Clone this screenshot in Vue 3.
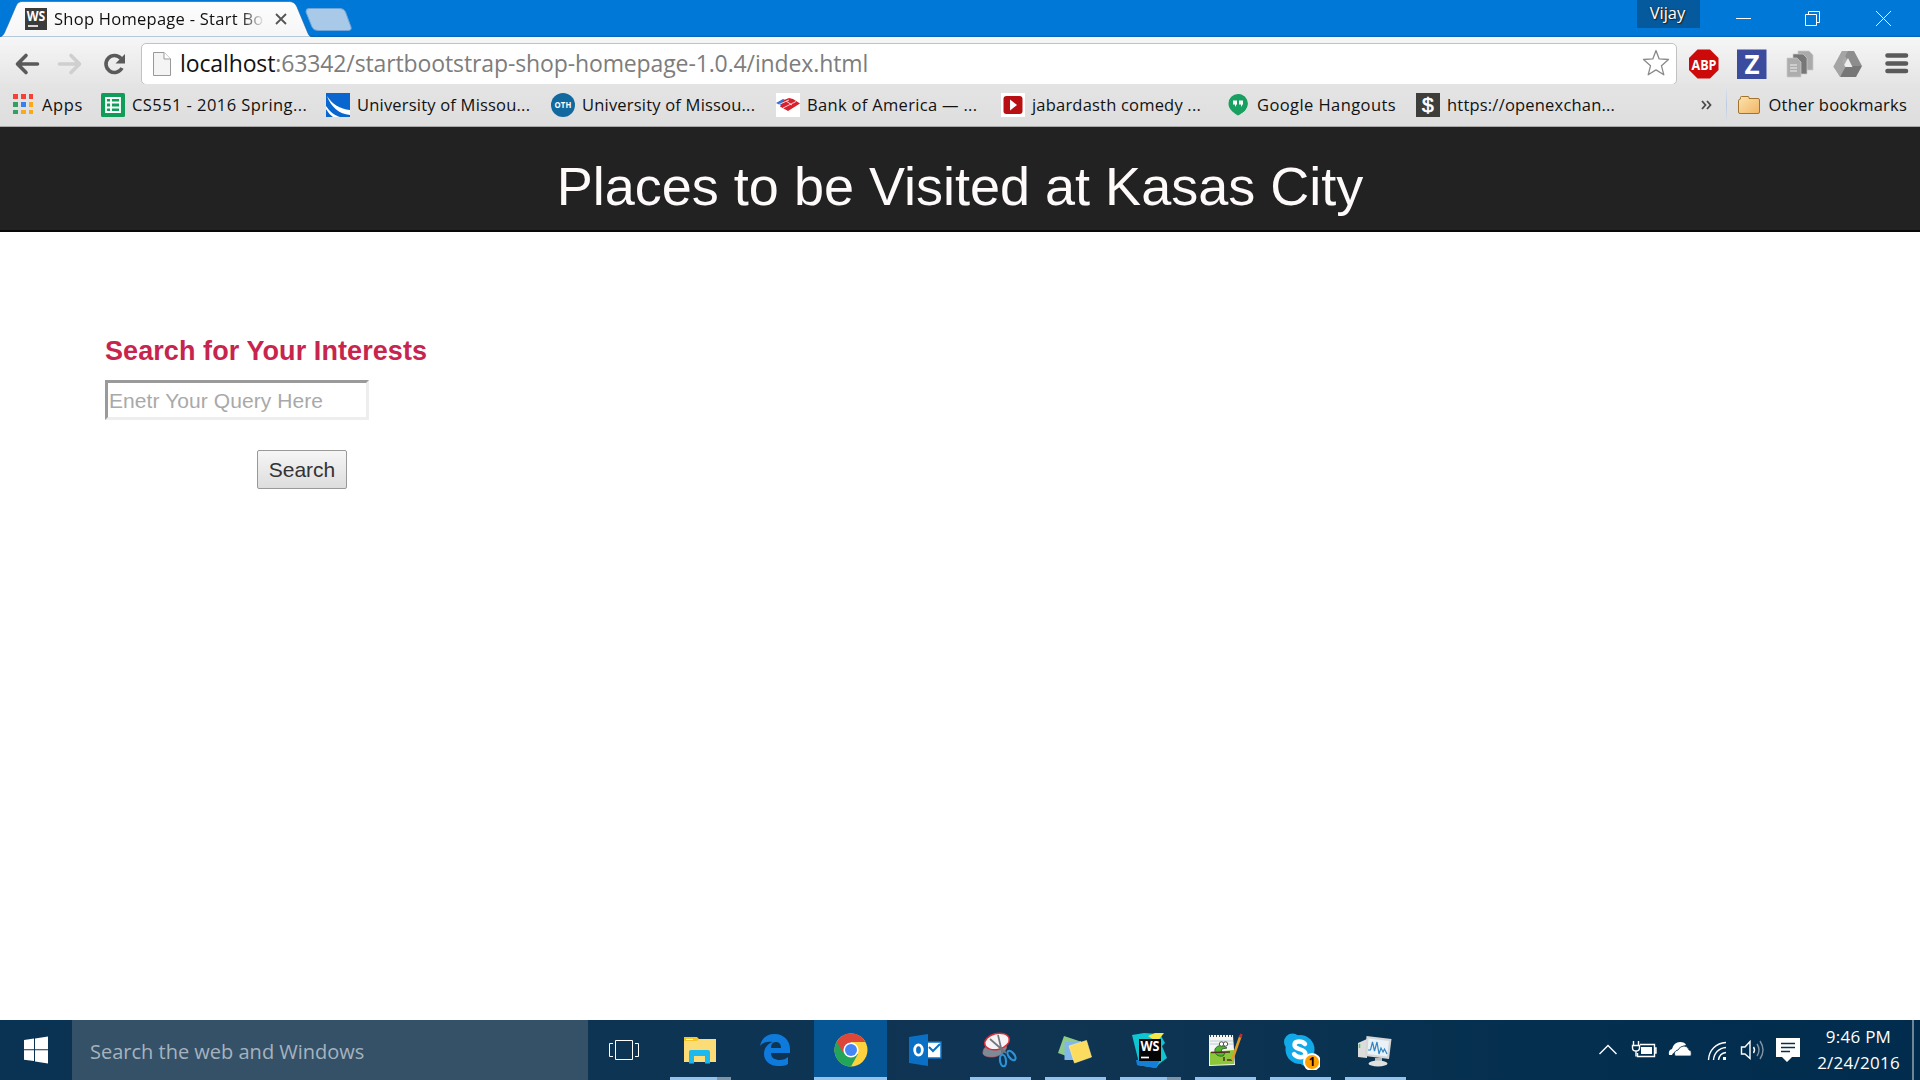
<script setup>
const bookmarks = [
  { id: 'apps', label: 'Apps' },
  { id: 'sheets', label: 'CS551 - 2016 Spring...' },
  { id: 'umkc', label: 'University of Missou...' },
  { id: 'oth', label: 'University of Missou...' },
  { id: 'boa', label: 'Bank of America — ...' },
  { id: 'yt', label: 'jabardasth comedy ...' },
  { id: 'hang', label: 'Google Hangouts' },
  { id: 'dollar', label: 'https://openexchan...' },
]
const tasks = ['view', 'explorer', 'edge', 'chrome', 'outlook', 'snip', 'sticky', 'ws', 'npp', 'skype', 'monitor']
</script>

<template>
  <div class="screen">
    <header class="titlebar">
      <svg class="tabs" width="370" height="37" viewBox="0 0 370 37">
        <defs><linearGradient id="tabg" x1="0" y1="0" x2="0" y2="1"><stop offset="0" stop-color="#fdfdfd" /><stop offset="1" stop-color="#f6f6f6" /></linearGradient></defs>
        <path d="M0 37C4 36 5 31 7 27L16 6C18 2 20 1.500 24 1.500H288C293 1.500 295 3 297 7L307 31C309 36 310 37 313 37Z" fill="url(#tabg)" stroke="#1a5f9f" stroke-width=".6" />
        <path d="M306 12Q305.500 8.500 309 8.500H340Q344 8.500 345.500 12L351 27Q352 30.500 348 30.500H318Q313.500 30.500 312 27Z" fill="#a9c9e8" stroke="#6fa5d6" />
      </svg>
      <div class="tab">
        <svg width="22" height="22" viewBox="0 0 22 22"><rect width="22" height="22" fill="#3b3b3b" /><text x="11" y="12.500" text-anchor="middle" font-family="Open Sans, sans-serif" font-weight="700" font-size="14" fill="#fff" textLength="18.500" lengthAdjust="spacingAndGlyphs">WS</text><path d="M3 18H13" stroke="#fff" stroke-width="1.600" /></svg>
        <span class="tabtitle">Shop Homepage - Start Bo</span>
        <svg class="tabx" width="12" height="12" viewBox="0 0 12 12"><path d="M1 1L11 11M11 1L1 11" stroke="#555" stroke-width="1.800" /></svg>
      </div>
      <div class="user">Vijay</div>
      <svg class="winbtns" width="220" height="37" viewBox="0 0 220 37" fill="none" stroke="#fff" stroke-width="1">
        <path d="M36 18.500H51M105.500 14.500H116.500V25.500H105.500ZM108.500 14V11.500H119.500V22.500H117M176 11L191 26M191 11L176 26" />
      </svg>
    </header>

    <div class="toolbar">
      <svg class="nav" width="141" height="47" viewBox="0 0 141 47" fill="none" stroke-linecap="round" stroke-linejoin="round">
        <path d="M37.500 27H18M26 18.500L17.500 27L26 35.500" stroke="#5a5a5a" stroke-width="3.600" />
        <path d="M59.500 27H79M71 18.500L79.500 27L71 35.500" stroke="#cfcfcf" stroke-width="3.600" />
        <path d="M121 21.500A8.500 8.500 0 1 0 122 31" stroke="#5a5a5a" stroke-width="3.600" stroke-linecap="butt" />
        <path d="M125 17V26.500H115.500Z" fill="#5a5a5a" />
      </svg>
      <div class="omnibox">
        <svg width="18" height="24" viewBox="0 0 18 24"><path d="M.5.5H11L17.500 7V23.500H.5Z" fill="#f4f4f4" stroke="#999" /><path d="M11 .5V7H17.500" fill="#fff" stroke="#999" /></svg>
        <span class="url"><b>localhost</b>:63342/startbootstrap-shop-homepage-1.0.4/index.html</span>
        <svg class="star" width="28" height="28" viewBox="0 0 28 28"><path d="M14 1.500L17.200 9.900L26.500 10.500L19.500 16.800L21.800 25.800L14 20.900L6.200 25.800L8.500 16.800L1.500 10.500L10.800 9.900Z" fill="#fff" stroke="#8a8a8a" stroke-width="1.300" stroke-linejoin="round" /></svg>
      </div>
      <svg class="exts" width="240" height="47" viewBox="0 0 240 47">
        <path d="M17.500 12.500H30L38.500 21V33L30 41.500H17.500L9 33V21Z" fill="#cc0a0a" />
        <text x="24" y="32.500" text-anchor="middle" font-family="Open Sans, sans-serif" font-weight="700" font-size="14" fill="#fff" textLength="25" lengthAdjust="spacingAndGlyphs">ABP</text>
        <rect x="57" y="12.500" width="29.500" height="29.500" fill="#3b4c9f" /><text x="72" y="36.500" text-anchor="middle" font-family="Open Sans, sans-serif" font-weight="700" font-size="26" fill="#fff">Z</text>
        <g stroke="#ccc" stroke-width=".7"><path d="M118 14H129L133 18V33H118Z" fill="#aaa" /><path d="M113 17H123L127 21V37H113Z" fill="#777" /><path d="M107 21H117L121 25V40H107Z" fill="#adadad" /></g><path d="M110 28H117M110 31H117M110 34H117" stroke="#eee" />
        <path d="M162 14H174L160 39L153.500 30Z" fill="#aaa" /><path d="M162 14H174L182 29H171Z" fill="#8d8d8d" /><path d="M164 29H182L176 40H160Z" fill="#777" /><path d="M168 21L172.500 30H163Z" fill="#eee" /><path d="M153.500 29.500L160 40L165.500 30L162 25L168 14H162Z" fill="#a4a4a4" />
        <path d="M207.500 18.500H226M207.500 26.500H226M207.500 34H226" stroke="#5a5a5a" stroke-width="4.600" stroke-linecap="round" />
      </svg>
    </div>

    <nav class="bookmarks">
      <div v-for="b in bookmarks" :key="b.id" class="bm" :class="b.id">
        <svg width="24" height="24" viewBox="0 0 24 24">
          <g v-if="b.id === 'apps'"><path d="M1 1h5v5H1zM9 1h5v5H9zM17 1h4v5h-4z" fill="#f44336" /><path d="M1 9h5v5H1zM1 17h5v4H1z" fill="#34a060" /><path d="M9 9h5v5H9z" fill="#3a7ff0" /><path d="M17 9h4v5h-4zM9 17h5v4H9zM17 17h4v4h-4z" fill="#fba819" /></g>
          <g v-else-if="b.id === 'sheets'"><rect width="24" height="24" rx="1.500" fill="#0f9d58" /><path d="M5 5H19V19H5ZM5 9.500H19M5 14.500H19M10 5V19" fill="none" stroke="#fff" stroke-width="1.800" /></g>
          <g v-else-if="b.id === 'umkc'"><rect width="24" height="24" fill="#0a66cf" /><path d="M1 3C6 11 14 16 24 17V22C13 21 5 14 1 3ZM0 13C4 19 8 22 14 24H7C4 22 2 19 0 16Z" fill="#fff" /></g>
          <g v-else-if="b.id === 'oth'"><circle cx="12" cy="12" r="12" fill="#12699f" /><text x="12" y="15" text-anchor="middle" font-family="Open Sans, sans-serif" font-weight="700" font-size="8.500" fill="#fff" textLength="17" lengthAdjust="spacingAndGlyphs">OTH</text></g>
          <g v-else-if="b.id === 'boa'"><rect width="24" height="24" fill="#fff" /><path d="M0 10L7 6L12 8.500L5 12.500Z" fill="#3a70d0" /><path d="M8 7L13 5L17 6L24 10.500L12 18L4 13.500Z" fill="#d8202c" /><path d="M3 11.500L13 7M7 15L20 8.500M10 8L16 12" stroke="#fff" stroke-width=".8" /></g>
          <g v-else-if="b.id === 'yt'"><rect width="24" height="24" fill="#fff" /><rect x="2.500" y="3" width="19" height="18" rx="3" fill="#b80f12" /><path d="M9 6.500L16 12L9 17.500Z" fill="#fff" /></g>
          <g v-else-if="b.id === 'hang'"><path d="M12 1A9.500 9.500 0 0 1 12 20.500V22.500C6 19 2.500 15.500 2.500 10.500A9.500 9.500 0 0 1 12 1Z" fill="#17a05f" /><path d="M12 1A9.500 9.500 0 0 1 21.500 10.500C21.500 16 17 20 12 22.500V20Z" fill="#17a05f" /><path d="M7 7.500H11V11L9 14V11.500H7ZM13 7.500H17V11L15 14V11.500H13Z" fill="#fff" /></g>
          <g v-else><rect width="24" height="24" fill="#3d3d3a" /><text x="12" y="19" text-anchor="middle" font-family="Liberation Sans, sans-serif" font-size="21" fill="#fff" stroke="#fff" stroke-width=".6">$</text></g>
        </svg>
        <span>{{ b.label }}</span>
      </div>
      <div class="right">
        <svg width="11" height="10" viewBox="0 0 11 10"><path d="M1 1L4.500 5L1 9M6 1L9.500 5L6 9" fill="none" stroke="#4a4a4a" stroke-width="1.800" /></svg>
        <i class="sep"></i>
        <svg width="22" height="18" viewBox="0 0 22 18"><defs><linearGradient id="fold" x1="0" y1="0" x2="1" y2="1"><stop offset="0" stop-color="#fde3ae" /><stop offset="1" stop-color="#f0b565" /></linearGradient></defs><path d="M2.500 3V1.500Q2.500.5 3.500.5H10Q11 .5 11 1.500V2.500H20Q21.500 2.500 21.500 4V16Q21.500 17.500 20 17.500H2Q.5 17.500.5 16V5Q.5 3 2.500 3Z" fill="url(#fold)" stroke="#a0742f" /></svg>
        <span>Other bookmarks</span>
      </div>
    </nav>

    <main class="page">
      <div class="banner"><h1>Places to be Visited at Kasas City</h1></div>
      <form class="search" @submit.prevent>
        <label for="q">Search for Your Interests</label>
        <input id="q" type="text" placeholder="Enetr Your Query Here" />
        <button type="submit">Search</button>
      </form>
    </main>

    <footer class="taskbar">
      <div class="start"><svg width="24" height="28" viewBox="0 0 24 28"><path d="M0 4L10 2.600V13.300H0ZM11 2.400L24 .5V13.300H11ZM0 14.300H10V25L0 23.700ZM11 14.300H24V27.500L11 25.500Z" fill="#fff" /></svg></div>
      <div class="cortana">Search the web and Windows</div>
      <div v-for="t in tasks" :key="t" class="task" :class="t">
        <svg width="40" height="40" viewBox="0 0 40 40">
          <g v-if="t === 'view'" fill="none" stroke="#fff"><path d="M10.500 10.500H27.500V29.500H10.500ZM8 13.500H4.500V26.500H8M30 13.500H33.500V26.500H30" /></g>
          <g v-else-if="t === 'explorer'"><path d="M4 7H17L19 9V12H4Z" fill="#f5c52c" /><path d="M6 9.500H13" stroke="#fff" /><path d="M4 11H17L19 9H36V32H4Z" fill="#fbdc77" /><path d="M9 33.500V22Q9 20 11 20H28Q30 20 30 22V33.500H25V26H14V33.500Z" fill="#1cb8ee" /></g>
          <g v-else-if="t === 'edge'"><path d="M5 16C7 7 13 4 20 4C29 4 35 11 35 19V23H16C16 28 20 30 25 30C28 30 31 29 33 27V34C30 36 27 36 23 36C14 36 9 30 9 24C9 18 13 13 18 12C13 11 8 12 5 16ZM16 18H26C26 14 24 12 21 12C18 12 16 14 16 18Z" fill="#0e7bdc" fill-rule="evenodd" /></g>
          <g v-else-if="t === 'chrome'"><circle cx="20" cy="20" r="16.500" fill="#fdd23d" /><path d="M20 20L5.700 11.800A16.500 16.500 0 0 0 20 36.500L27 24Z" fill="#22a45a" /><path d="M20 20V12H34.500A16.500 16.500 0 0 0 5.700 11.800L13 24Z" fill="#dc473a" /><circle cx="20" cy="20" r="7.600" fill="#fff" /><circle cx="20" cy="20" r="6" fill="#4486f5" /></g>
          <g v-else-if="t === 'outlook'"><path d="M21 12H36V28H21Z" fill="#fff" stroke="#0872c9" stroke-width="1.500" /><path d="M24 17L28 21L35 14" fill="none" stroke="#0872c9" stroke-width="2" /><path d="M4 7L23 4V36L4 33Z" fill="#0a70c6" /><ellipse cx="13.500" cy="20" rx="3.800" ry="5.200" fill="none" stroke="#fff" stroke-width="2.800" /></g>
          <g v-else-if="t === 'snip'"><path d="M3 22C4 15 10 14 26 14C29 20 20 27 12 27C6 27 2 25 3 22Z" fill="#7e8b97" stroke="#c65a6a" stroke-width=".7" /><ellipse cx="17" cy="11.500" rx="12.500" ry="8" transform="rotate(-14 17 11.500)" fill="#f5f3f6" stroke="#d92b35" stroke-width="1.500" /><path d="M18 5L22.500 24M10 9L26 23" stroke="#70767c" stroke-width="1.700" /><g fill="none" stroke="#2d93d8" stroke-width="2.200"><ellipse cx="23" cy="30.500" rx="3" ry="5.800" transform="rotate(-8 23 30.500)" /><ellipse cx="31.500" cy="25.500" rx="2.800" ry="5.500" transform="rotate(-38 31.500 25.500)" /></g></g>
          <g v-else-if="t === 'sticky'"><path d="M9 6L24 11L17 28L3 23Z" fill="#8fca86" /><path d="M9.500 12L26 11L27 30L9.500 30Z" fill="#82b7ea" /><path d="M14 16L31.500 10.500L36.500 27L19.500 33Z" fill="#fbdc5f" stroke="#fff1a0" stroke-width=".6" /></g>
          <g v-else-if="t === 'ws'"><path d="M2 5L14 3L30 4L35 13L32 16L37 28L29 34L26 38L7 35L8 29Z" fill="#10c5cf" /><path d="M18 6L25 3H34L27 12Z" fill="#f5e64a" /><path d="M6 30H30L26 38L7 35Z" fill="#147ed8" /><rect x="9" y="9" width="22" height="22" fill="#050505" /><path d="M11 27.500H19" stroke="#fff" stroke-width="1.700" /><text x="20" y="21" text-anchor="middle" font-family="Open Sans, sans-serif" font-weight="700" font-size="14" fill="#fff" textLength="19" lengthAdjust="spacingAndGlyphs">WS</text></g>
          <g v-else-if="t === 'npp'"><path d="M4 5H28L30 35L4 36Z" fill="#f5f7f5" /><path d="M5 6H27" stroke="#444" stroke-width="2" stroke-dasharray="1 2" /><path d="M5 11H28M5 14H28" stroke="#b9cad6" /><path d="M5 22L29 20V34L5 35Z" fill="#8cc63b" /><path d="M10 19C13 14 18 15 22 18L17 19L16 22L20 23L18 26C13 27 9 24 10 19Z" fill="#4fb32e" stroke="#255820" stroke-width=".8" /><g fill="#fff" stroke="#444" stroke-width=".9"><circle cx="16.500" cy="14" r="2.200" /><circle cx="20.500" cy="14" r="2.200" /></g><path d="M6 22.500L25 22M19 27V31M22 30H27" stroke="#552d25" stroke-width="1.500" /><path d="M35.500 6L27 30" stroke="#e19a26" stroke-width="2.600" /><path d="M35 7.500L36.500 4" stroke="#bc2f2f" stroke-width="2.600" /></g>
          <g v-else-if="t === 'skype'"><circle cx="12.500" cy="12" r="8.500" fill="#11a9e8" /><circle cx="26" cy="27" r="9" fill="#11a9e8" /><circle cx="20" cy="19.500" r="14.500" fill="#11a9e8" /><path d="M25 14C22 10.500 14.500 10.500 14.500 15C14.500 20.500 25.500 18 25.500 24C25.500 28.500 16.500 28 14 24" fill="none" stroke="#fff" stroke-width="4.400" stroke-linecap="round" /><circle cx="32" cy="32" r="9" fill="#fff" /><circle cx="32" cy="32" r="7" fill="#ffa000" /><text x="32" y="36" text-anchor="middle" font-family="Open Sans, sans-serif" font-weight="700" font-size="11.500" fill="#000">1</text></g>
          <g v-else><path d="M3 13L12 9V28L3 27Z" fill="#dcdcdc" /><path d="M4.500 14V18" stroke="#4fd04f" stroke-width="1.500" /><path d="M11.500 6L36.500 9L34 29L10 26Z" fill="#d6d6d6" /><path d="M13.500 8.500L34 11L32 26.500L12.500 24Z" fill="#e9f2f8" /><path d="M13 20L15.500 20L17.500 12L19.500 21L22 12L24 24L26 18L28 22L29.500 19L32 24" fill="none" stroke="#3584c2" stroke-width="1.200" /><path d="M20 28H27V33H20Z" fill="#bbb" /><ellipse cx="23" cy="33.500" rx="9.500" ry="3" fill="#e0e0e0" /></g>
        </svg>
      </div>
      <div class="tray">
        <svg width="230" height="60" viewBox="0 0 230 60" fill="none" stroke="#fff" stroke-width="1.400">
          <path d="M9.500 34L18 25.500L26.500 34" />
          <path d="M50 24.500H64.500V36.500H47.500V33M64.500 28H66V33H64.500" /><path d="M51 27H62V34H51Z" fill="#fff" stroke="none" /><path d="M43.500 21V25M48.500 21V25M42.500 25.500H49.500V28Q49.500 31 46 31Q42.500 31 42.500 28ZM46 31V36.500" />
          <path d="M79 35Q78 30 82 29Q84 22 90 22Q95 22 96 25Q88 27 87 32Q83 32 82 35Z" fill="#fff" stroke="none" /><path d="M85 36Q83 31 88 30Q90 26 94 26Q98 26 99 30Q102 30 101 36Z" fill="#fff" stroke="#06304f" stroke-width=".8" />
          <path d="M118.500 40C119 30 126 23 136 22.500M123.500 40C124 33 129 28 136 27.500M128.500 40C129 36 132 33 136 32.500" /><path d="M133 37H136V40H133Z" fill="#fff" stroke="none" />
          <path d="M151.500 27H155L160 21.500V38.500L155 34H151.500Z" /><path d="M163.500 27Q165.500 30 163.500 33" /><path d="M167 24Q171 30 167 36M170 21Q176 30 170 39" stroke="#8193a5" />
          <path d="M186 18H210V37H202L197 42L192 37H186Z" fill="#fff" stroke="none" /><path d="M191 23.500H205M191 27.500H205M191 31.500H200" stroke="#05304f" />
        </svg>
        <div class="clock"><span>9:46 PM</span><span>2/24/2016</span></div>
      </div>
    </footer>
  </div>
</template>

<style>
body { margin: 0; overflow: hidden; background: #fff; }
</style>
<style scoped>
.screen { width: 1920px; height: 1080px; display: flex; flex-direction: column; font-family: "Open Sans", "Noto Sans", sans-serif; color: #111; background: #fff; }
.titlebar { position: relative; height: 37px; display: flex; background: linear-gradient(#0078d7 35px, #0062b1); }
.tabs { position: absolute; left: 0; top: 0; }
.tab { position: relative; width: 1637px; display: flex; align-items: flex-start; padding: 8px 0 0 25px; box-sizing: border-box; }
.tabtitle { width: 211px; margin-left: 7px; overflow: hidden; white-space: nowrap; font-size: 16.500px; line-height: 22px; letter-spacing: .27px; -webkit-mask-image: linear-gradient(90deg, #000 187px, transparent 211px); mask-image: linear-gradient(90deg, #000 187px, transparent 211px); }
.tabx { margin: 5px 0 0 10px; }
.user { width: 63px; height: 28px; background: #055a9e; color: #fff; text-align: center; font-size: 16.500px; line-height: 26px; text-indent: -2px; text-shadow: 0 0 2px #222, 1px 1px 1px #222; }
.winbtns { flex: none; }
.toolbar { height: 47px; display: flex; align-items: flex-start; background: linear-gradient(#f6f6f6, #e5e5e5); }
.nav, .exts { flex: none; }
.exts { margin-left: 3px; }
.omnibox { box-sizing: border-box; flex: none; width: 1536px; height: 42px; margin-top: 6px; padding: 0 6px 0 11px; display: flex; align-items: center; background: #fff; border: 1.500px solid #c2c2c2; border-radius: 5px; }
.url { margin: -2px 0 0 9px; font-size: 23px; line-height: 30px; letter-spacing: -.12px; color: #7d7d7d; }
.url b { font-weight: 400; color: #111; }
.star { margin: -2px 0 0 auto; }
.bookmarks { box-sizing: border-box; height: 43px; display: flex; align-items: flex-start; padding: 9px 13px 0 12px; background: linear-gradient(#e4e4e4, #dedede); border-bottom: 1px solid #a9a9a9; font-size: 16.500px; line-height: 24px; letter-spacing: .2px; white-space: nowrap; }
.bm { display: flex; flex: none; width: 225px; }
.bm svg { flex: none; margin-right: 7px; }
.bm.apps { width: 89px; letter-spacing: .65px; } .bm.apps svg { margin-right: 6px; }
.bm.sheets { letter-spacing: .43px; }
.bm.boa { letter-spacing: .32px; }
.bm.hang { width: 190px; letter-spacing: .42px; }
.right { height: 24px; margin-left: auto; display: flex; align-items: center; }
.sep { width: 1px; height: 34px; margin: -5px 11px -5px 14px; background: linear-gradient(#dbe4ee, #b9cbe0, #dcdfe3); }
.right span { margin-left: 9px; }
.page { flex: 1; background: #fff; }
.banner { box-sizing: border-box; height: 105px; background: #222; border-bottom: 2px solid #080808; text-align: center; }
h1 { display: inline-block; margin: 0; padding-top: 29px; font: 400 54px/60px "Liberation Sans", Arial, sans-serif; color: #fffafa; }
.search { display: flex; flex-direction: column; align-items: flex-start; margin: 104px 0 0 105px; font-family: "Liberation Sans", Arial, sans-serif; }
.search label { font-size: 27px; line-height: 30px; font-weight: 700; letter-spacing: .08px; color: #c7254e; }
input { box-sizing: border-box; width: 264px; height: 40px; margin: 14px 0 0; padding: 2px 1px 1px; border: 3px solid; border-color: #9a9a9a #eee #eee #9a9a9a; font: 21px/28px "Liberation Sans", Arial, sans-serif; letter-spacing: .08px; }
input::placeholder { color: #a9a9a9; }
button { box-sizing: border-box; width: 90px; height: 39px; margin: 30px 0 0 152px; padding: 0; border: 1.500px solid #999; border-radius: 2px; background: linear-gradient(#f6f6f6, #ddd); font: 21px/30px "Liberation Sans", Arial, sans-serif; color: #333; }
.taskbar { height: 60px; display: flex; background: linear-gradient(90deg, #0a3253, #103553 55%, #052f4f 80%, #022c4d); }
.start { width: 72px; display: flex; align-items: center; justify-content: center; }
.cortana { box-sizing: border-box; width: 516px; padding-left: 18px; background: #345168; color: #a6b3be; font-size: 20px; line-height: 63px; }
.task { position: relative; width: 75px; display: flex; align-items: center; justify-content: center; }
.task svg { margin-left: -2px; }
.task.chrome svg { margin-left: 0; }
.task::after { content: ""; position: absolute; left: 7px; bottom: 0; width: 61px; height: 3px; background: #95c2ea; }
.view::after, .edge::after, .outlook::after { display: none; }
.explorer::after, .ws::after { background: linear-gradient(90deg, #95c2ea 47px, #7e95a8 47px); }
.chrome { width: 73px; margin: 0 1px; background: #065594; }
.task.chrome::after { left: 0; width: 73px; }
.tray { box-sizing: border-box; margin-left: auto; width: 330px; padding-right: 6px; display: flex; }
.tray > svg { flex: none; }
.clock { box-sizing: border-box; width: 94px; flex: none; display: flex; flex-direction: column; align-items: center; padding: 4px 15px 0 0; color: #fff; font-size: 17px; line-height: 26px; letter-spacing: .25px; border-right: 2px solid #6f8496; }
</style>
